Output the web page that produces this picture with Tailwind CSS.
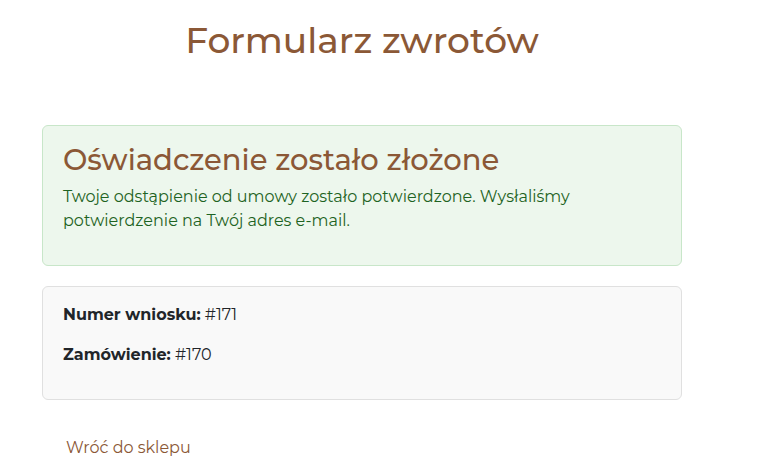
<!DOCTYPE html>
<html lang="pl">
<head>
  <meta charset="UTF-8" />
  <meta name="viewport" content="width=device-width, initial-scale=1.0" />
  <title>Formularz zwrotów</title>
  <script src="https://cdn.jsdelivr.net/npm/@tailwindcss/browser@4"></script>
</head>
<body class="bg-white text-[#212529] font-[Montserrat,Inter,sans-serif] text-base">

  <main class="max-w-[724px] px-[42px] pt-5">
    <h1 class="text-4xl font-medium text-[#8b5836] text-center">Formularz zwrotów</h1>

    <!-- Confirmation -->
    <section class="mt-[65px] rounded-md border border-[#c8e6c9] bg-[#edf7ed] px-5 pt-4 pb-8 text-[#1e6323]">
      <h2 class="text-[29px] leading-9 font-medium text-[#8b5836] mb-[7px]">Oświadczenie zostało złożone</h2>
      <p class="max-w-[540px]">Twoje odstąpienie od umowy zostało potwierdzone. Wysłaliśmy potwierdzenie na Twój adres e-mail.</p>
    </section>

    <!-- Request details -->
    <section class="mt-5 flex flex-col gap-4 rounded-md border border-[#e0e0e0] bg-[#f9f9f9] px-5 pt-4 pb-8">
      <p><strong>Numer wniosku:</strong> #171</p>
      <p><strong>Zamówienie:</strong> #170</p>
    </section>

    <a href="#" class="mt-9 ml-6 inline-block text-[#8b5836]">Wróć do sklepu</a>
  </main>

</body>
</html>
